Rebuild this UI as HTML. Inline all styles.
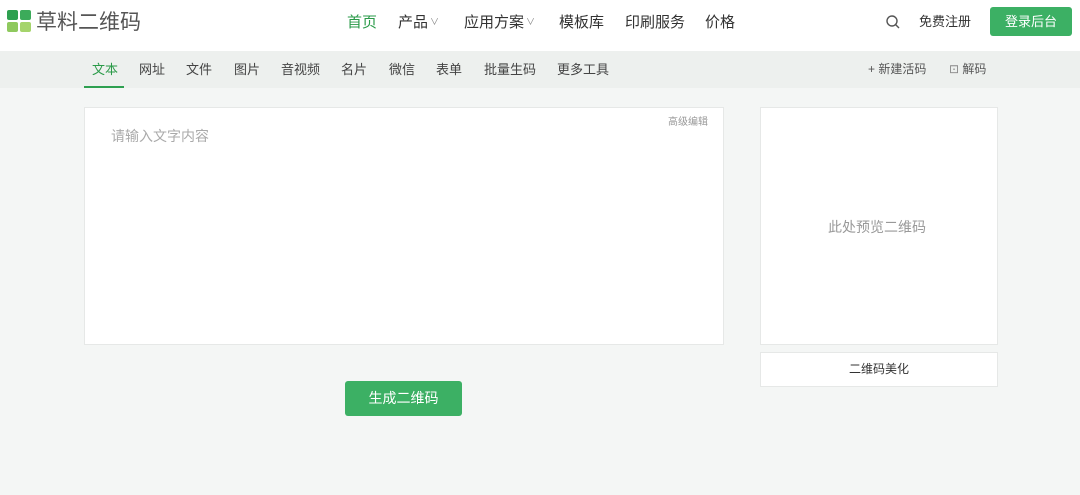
<!DOCTYPE html>
<html><head><meta charset="utf-8"><style>
*{margin:0;padding:0;box-sizing:border-box}
body{width:1080px;height:495px;background:#f4f6f5;font-family:"Liberation Sans","Noto Sans CJK SC",sans-serif;position:relative;overflow:hidden;color:#333}
.hdr{position:absolute;left:0;top:0;width:1080px;height:51px;background:#fff}
.sub{position:absolute;left:0;top:51px;width:1080px;height:37px;background:#edf0ee}
.a{position:absolute;white-space:nowrap;line-height:1.2}
.logo{position:absolute;left:7px;top:10px;width:24px;height:23px}
.logo i{position:absolute;width:11px;height:10px;border-radius:2px}
.box{position:absolute;background:#fff;border:1px solid #e6e8e7}
.c{font-size:9px;color:#888;margin-left:2px;vertical-align:2px}
</style></head><body>
<div class="hdr"></div>
<div class="logo"><i style="left:0;top:0;background:#2ea050"></i><i style="left:13px;top:0;background:#3cab5a"></i><i style="left:0;top:12px;background:#8fc95e"></i><i style="left:13px;top:12px;background:#a5d46b"></i></div>
<div class="a" style="left:36px;top:10px;font-size:21px;color:#555">草料二维码</div>
<div class="a" style="left:347px;top:14px;font-size:15px;color:#2a9a48">首页</div>
<div class="a" style="left:398px;top:14px;font-size:15px">产品<span class="c">∨</span></div>
<div class="a" style="left:464px;top:14px;font-size:15px">应用方案<span class="c">∨</span></div>
<div class="a" style="left:559px;top:14px;font-size:15px">模板库</div>
<div class="a" style="left:625px;top:14px;font-size:15px">印刷服务</div>
<div class="a" style="left:705px;top:14px;font-size:15px">价格</div>
<svg class="a" style="left:885px;top:14px" width="16" height="16" viewBox="0 0 16 16"><circle cx="7" cy="7" r="5" fill="none" stroke="#555" stroke-width="1.4"/><path d="M10.5 10.5L14 14" stroke="#555" stroke-width="1.4"/></svg>
<div class="a" style="left:919px;top:14px;font-size:13px">免费注册</div>
<div class="a" style="left:990px;top:7px;width:82px;height:29px;background:#3cb064;border-radius:3px;color:#fff;font-size:13px;text-align:center;line-height:29px">登录后台</div>
<div class="sub"></div>
<div class="a" style="left:92px;top:62px;font-size:13px;color:#2a9a48">文本</div>
<div class="a" style="left:84px;top:86px;width:40px;height:2px;background:#2ea050"></div>
<div class="a" style="left:139px;top:62px;font-size:13px;color:#444">网址</div>
<div class="a" style="left:186px;top:62px;font-size:13px;color:#444">文件</div>
<div class="a" style="left:234px;top:62px;font-size:13px;color:#444">图片</div>
<div class="a" style="left:281px;top:62px;font-size:13px;color:#444">音视频</div>
<div class="a" style="left:341px;top:62px;font-size:13px;color:#444">名片</div>
<div class="a" style="left:389px;top:62px;font-size:13px;color:#444">微信</div>
<div class="a" style="left:436px;top:62px;font-size:13px;color:#444">表单</div>
<div class="a" style="left:484px;top:62px;font-size:13px;color:#444">批量生码</div>
<div class="a" style="left:557px;top:62px;font-size:13px;color:#444">更多工具</div>
<div class="a" style="left:868px;top:62px;font-size:12px;color:#555">+ 新建活码</div>
<div class="a" style="left:949px;top:62px;font-size:12px;color:#555"><span style="color:#888">⊡</span> 解码</div>
<div class="box" style="left:84px;top:107px;width:640px;height:238px"></div>
<div class="a" style="left:111px;top:128px;font-size:14px;color:#aaa">请输入文字内容</div>
<div class="a" style="left:668px;top:117px;font-size:10px;color:#999">高级编辑</div>
<div class="box" style="left:760px;top:107px;width:238px;height:238px"></div>
<div class="a" style="left:828px;top:219px;font-size:14px;color:#999">此处预览二维码</div>
<div class="box" style="left:760px;top:352px;width:238px;height:35px;text-align:center;line-height:33px;font-size:12px;color:#333">二维码美化</div>
<div class="a" style="left:345px;top:381px;width:117px;height:35px;background:#3cb064;border-radius:3px;color:#fff;font-size:14px;text-align:center;line-height:35px">生成二维码</div>
</body></html>
